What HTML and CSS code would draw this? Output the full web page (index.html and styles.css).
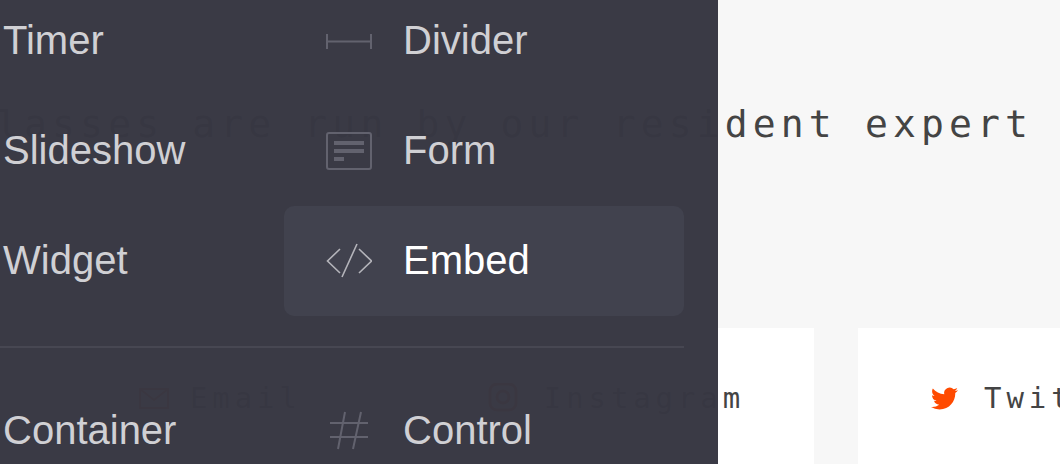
FILE: index.html
```html
<!DOCTYPE html>
<html lang="en">
<head>
  <meta charset="UTF-8" />
  <meta name="viewport" content="width=device-width, initial-scale=1.0"/>
  <title>Classes - Editor</title>
  <link rel="stylesheet" href="styles.css">
</head>
<body>

<main class="page">
  <p class="intro">Classes are run by our resident expert</p>
  <div class="socials">
    <a class="social email">
      <svg class="social-icon" viewBox="0 0 30 30"><path d="M1 6h28v19H1z M1 6l14 11L29 6" fill="none" stroke="#ff4a00" stroke-width="2"/></svg>
      Email
    </a>
    <a class="social">
      <svg class="social-icon" viewBox="0 0 30 30"><rect x="2" y="1" width="26" height="26" rx="7" fill="none" stroke="#ff4a00" stroke-width="3"/><circle cx="15" cy="14" r="6" fill="none" stroke="#ff4a00" stroke-width="3"/></svg>
      Instagram
    </a>
    <a class="social">
      <svg class="social-icon twitter" viewBox="0 0 24 24"><path fill="#ff4a00" d="M23.95 4.57a10 10 0 0 1-2.82.77 4.96 4.96 0 0 0 2.16-2.72c-.95.55-2 .96-3.12 1.19a4.92 4.92 0 0 0-8.38 4.48C7.69 8.1 4.07 6.13 1.64 3.16a4.82 4.82 0 0 0-.66 2.47c0 1.71.87 3.21 2.19 4.1a4.9 4.9 0 0 1-2.23-.61v.06a4.92 4.92 0 0 0 3.95 4.83 5 5 0 0 1-2.21.08 4.94 4.94 0 0 0 4.6 3.42A9.87 9.87 0 0 1 0 19.54a14 14 0 0 0 7.56 2.21c9.05 0 14-7.5 14-13.98 0-.21 0-.42-.02-.63a9.94 9.94 0 0 0 2.46-2.55z"/></svg>
      Twitter
    </a>
  </div>
</main>

<aside class="panel">
  <div class="menu">
    <a class="menu-item"><span class="menu-icon"></span><span class="menu-label">Timer</span></a>
    <a class="menu-item">
      <svg class="menu-icon" viewBox="0 0 46 46"><path d="M1 16v15M45 16v15M1 23.500h44" fill="none" stroke="currentColor" stroke-width="2"/></svg>
      <span class="menu-label">Divider</span>
    </a>
    <a class="menu-item"><span class="menu-icon"></span><span class="menu-label">Slideshow</span></a>
    <a class="menu-item">
      <svg class="menu-icon" viewBox="0 0 46 46">
        <rect x="1" y="5" width="44" height="36" rx="2" fill="none" stroke="currentColor" stroke-width="2"/>
        <path d="M8 13h30v4H8zM8 21h30v4H8zM8 29h10v4H8z" fill="currentColor"/>
      </svg>
      <span class="menu-label">Form</span>
    </a>
    <a class="menu-item"><span class="menu-icon"></span><span class="menu-label">Widget</span></a>
    <a class="menu-item active">
      <svg class="menu-icon" viewBox="0 0 46 46"><path d="M14 11L1.500 23 14 35M33 11l12.500 12L33 35M31 6L16 39" fill="none" stroke="currentColor" stroke-width="1.600"/></svg>
      <span class="menu-label">Embed</span>
    </a>
  </div>
  <hr class="menu-line">
  <div class="menu">
    <a class="menu-item"><span class="menu-icon"></span><span class="menu-label">Container</span></a>
    <a class="menu-item">
      <svg class="menu-icon" viewBox="0 0 46 46"><path d="M4 15h38M4 29h38M19 4l-7 37M35 4l-8 37" fill="none" stroke="currentColor" stroke-width="2"/></svg>
      <span class="menu-label">Control</span>
    </a>
  </div>
</aside>

</body>
</html>
```
FILE: styles.css
```css
html, body {
  height: 100%;
}

body {
  margin: 0;
  background: #f7f7f7;
  color: #444444;
  font-family: 'DejaVu Sans Mono', monospace;
  overflow: hidden;
}

.page {
  height: 464px;
  overflow: hidden;
}

.intro {
  margin: 0 0 0 -32px;
  padding-top: 100px;
  font-size: 38px;
  line-height: 48px;
  letter-spacing: 5.150px;
  white-space: nowrap;
}

.socials {
  display: flex;
  gap: 44px;
  margin-top: 180px;
  padding-left: 66px;
}

.social {
  display: flex;
  flex: none;
  align-items: center;
  gap: 26px;
  height: 140px;
  padding: 0 69px 0 73px;
  background: #ffffff;
  font-size: 29px;
  letter-spacing: 4.900px;
}

.social.email {
  gap: 21px;
}

.social-icon {
  width: 30px;
  height: 30px;
}

.social-icon.twitter {
  width: 27px;
  height: 27px;
}

.panel {
  position: absolute;
  top: 0;
  left: 0;
  bottom: 0;
  width: 718px;
  overflow: hidden;
  background: rgba(55, 55, 66, 0.985);
}

.menu {
  display: grid;
  grid-template-columns: 400px 400px;
  margin-left: -116px;
}

.panel > .menu:first-child {
  margin-top: -14px;
}

.menu-item {
  display: flex;
  align-items: center;
  gap: 31px;
  height: 110px;
  padding-left: 42px;
  border-radius: 10px;
  color: #d0d0d4;
  font-family: 'Liberation Sans', sans-serif;
  font-size: 40px;
  line-height: 44px;
}

.menu-label {
  margin-bottom: 2px;
}

.menu-item.active {
  background: #41424e;
  color: #ffffff;
}

.menu-icon {
  flex: none;
  width: 46px;
  height: 46px;
  color: #62626e;
}

.active .menu-icon {
  color: #b4b4ba;
}

.menu-line {
  width: 684px;
  height: 2px;
  margin: 30px 0 28px;
  border: none;
  background: #474752;
}
```
